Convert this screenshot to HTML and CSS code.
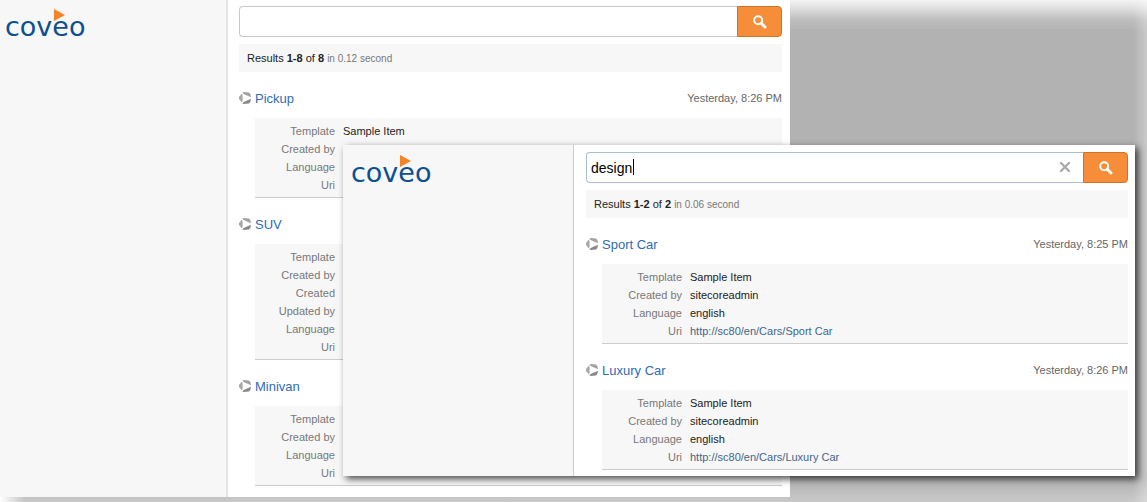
FILE: index.html
```html
<!DOCTYPE html>
<html lang="en">

<head>
    <meta charset="UTF-8">
    <title>Coveo Search</title>
    <link rel="stylesheet" href="styles.css">
</head>

<body>

    <!-- shared icons -->
    <svg class="sprite" aria-hidden="true">
        <symbol id="icon-search" viewBox="0 0 14 14">
            <circle cx="5.2" cy="5.2" r="4" fill="none" stroke="#fff" stroke-width="1.9" />
            <path d="M8.2 8.2 L12 12" stroke="#fff" stroke-width="3" stroke-linecap="round" />
        </symbol>
        <symbol id="icon-item" viewBox="0 0 12 12">
            <path d="M2.6 1.8 L3.6 3 L3.6 9 L2.6 10.2 L0 7 L0 5 Z" fill="#a8a8a8" />
            <path d="M3.2 0.8 L5 0 L10 0.4 L11.4 2 L12 5.2 L4.6 2 Z" fill="#a2a2a2" />
            <path d="M3.2 11.2 L5 12 L10 11.6 L11.4 10 L12 6.8 L4.6 10 Z" fill="#8a8a8a" />
        </symbol>
        <symbol id="icon-arrow" viewBox="0 0 11 12">
            <path d="M0 0 L11 6 L0 12 Z" fill="#f58426" />
        </symbol>
    </svg>

    <div class="window window-back">
        <aside class="sidebar">
            <a class="logo" href="#">coveo<svg class="logo-arrow"><use href="#icon-arrow" /></svg></a>
        </aside>
        <main class="content">
            <form class="search">
                <input class="search-box" type="text" aria-label="Search">
                <button class="search-button" type="button" aria-label="Search"><svg><use href="#icon-search" /></svg></button>
            </form>
            <p class="summary">Results <b>1-8</b> of <b>8</b> <span>in 0.12 second</span></p>

            <article class="result">
                <header class="result-header">
                    <svg class="item-icon"><use href="#icon-item" /></svg>
                    <a class="title" href="#">Pickup</a>
                    <time>Yesterday, 8:26 PM</time>
                </header>
                <table class="fields">
                    <tr><th scope="row">Template</th><td>Sample Item</td></tr>
                    <tr><th scope="row">Created by</th><td>sitecoreadmin</td></tr>
                    <tr><th scope="row">Language</th><td></td></tr>
                    <tr><th scope="row">Uri</th><td></td></tr>
                </table>
            </article>

            <article class="result">
                <header class="result-header">
                    <svg class="item-icon"><use href="#icon-item" /></svg>
                    <a class="title" href="#">SUV</a>
                </header>
                <table class="fields">
                    <tr><th scope="row">Template</th><td></td></tr>
                    <tr><th scope="row">Created by</th><td></td></tr>
                    <tr><th scope="row">Created</th><td></td></tr>
                    <tr><th scope="row">Updated by</th><td></td></tr>
                    <tr><th scope="row">Language</th><td></td></tr>
                    <tr><th scope="row">Uri</th><td></td></tr>
                </table>
            </article>

            <article class="result">
                <header class="result-header">
                    <svg class="item-icon"><use href="#icon-item" /></svg>
                    <a class="title" href="#">Minivan</a>
                </header>
                <table class="fields">
                    <tr><th scope="row">Template</th><td></td></tr>
                    <tr><th scope="row">Created by</th><td></td></tr>
                    <tr><th scope="row">Language</th><td></td></tr>
                    <tr><th scope="row">Uri</th><td></td></tr>
                </table>
            </article>
        </main>
    </div>

    <div class="window window-front">
        <aside class="sidebar">
            <a class="logo" href="#">coveo<svg class="logo-arrow"><use href="#icon-arrow" /></svg></a>
        </aside>
        <main class="content">
            <form class="search">
                <input class="search-box" type="text" value="design" aria-label="Search">
                <span class="caret"></span>
                <button class="clear-button" type="button" aria-label="Clear"><svg viewBox="0 0 12 12"><path d="M2 2 L10 10 M10 2 L2 10" stroke="#aaa" stroke-width="2.4" stroke-linecap="round" /></svg></button>
                <button class="search-button" type="button" aria-label="Search"><svg><use href="#icon-search" /></svg></button>
            </form>
            <p class="summary">Results <b>1-2</b> of <b>2</b> <span>in 0.06 second</span></p>

            <article class="result">
                <header class="result-header">
                    <svg class="item-icon"><use href="#icon-item" /></svg>
                    <a class="title" href="#">Sport Car</a>
                    <time>Yesterday, 8:25 PM</time>
                </header>
                <table class="fields">
                    <tr><th scope="row">Template</th><td>Sample Item</td></tr>
                    <tr><th scope="row">Created by</th><td>sitecoreadmin</td></tr>
                    <tr><th scope="row">Language</th><td>english</td></tr>
                    <tr><th scope="row">Uri</th><td><a href="#">http://sc80/en/Cars/Sport Car</a></td></tr>
                </table>
            </article>

            <article class="result">
                <header class="result-header">
                    <svg class="item-icon"><use href="#icon-item" /></svg>
                    <a class="title" href="#">Luxury Car</a>
                    <time>Yesterday, 8:26 PM</time>
                </header>
                <table class="fields">
                    <tr><th scope="row">Template</th><td>Sample Item</td></tr>
                    <tr><th scope="row">Created by</th><td>sitecoreadmin</td></tr>
                    <tr><th scope="row">Language</th><td>english</td></tr>
                    <tr><th scope="row">Uri</th><td><a href="#">http://sc80/en/Cars/Luxury Car</a></td></tr>
                </table>
            </article>
        </main>
    </div>

</body>

</html>
```
FILE: styles.css
```css
* {
    box-sizing: border-box;
}

body {
    position: relative;
    margin: 0;
    min-height: 100vh;
    font-family: "Liberation Sans", Arial, sans-serif;
    font-size: 11px;
    color: #222;
    background:
        linear-gradient(to bottom, rgba(255, 255, 255, 0.85), rgba(255, 255, 255, 0.6) 8px, rgba(255, 255, 255, 0.15) 20px, transparent 32px),
        linear-gradient(to left, rgba(255, 255, 255, 0.3), transparent 14px),
        linear-gradient(to right, #fff, transparent 24px),
        linear-gradient(to top, rgba(255, 255, 255, 0.3), transparent 24px),
        #b2b2b2;
}

a {
    text-decoration: none;
}

.sprite {
    position: absolute;
    width: 0;
    height: 0;
}

.window {
    display: flex;
    background: #fff;
}

.window-back {
    margin-right: 357px;
}

.window-front {
    position: absolute;
    top: 145px;
    left: 343px;
    right: 12px;
    box-shadow: 3px 3px 7px rgba(0, 0, 0, 0.7);
}

.sidebar {
    flex: none;
    width: 228px;
    padding: 9px 5px;
    background: #f7f7f7;
    border-right: 2px solid #e4e4e4;
}

.window-front .sidebar {
    width: 231px;
    padding: 10px 8px;
    border-right: 1px solid #ccc;
}

.logo {
    position: relative;
    display: inline-block;
    font-family: "DejaVu Sans", sans-serif;
    font-size: 27px;
    line-height: 36px;
    color: #0d4f8f;
}

.logo-arrow {
    position: absolute;
    top: 0;
    left: 49px;
    width: 11px;
    height: 12px;
}

.content {
    flex: 1;
    padding: 6px 8px 11px 11px;
}

.window-front .content {
    padding: 7px 7px 6px 12px;
}

.search {
    position: relative;
    display: flex;
    height: 31px;
}

.search-box {
    flex: 1;
    min-width: 0;
    padding: 0 4px;
    font: 14px "Liberation Sans", Arial, sans-serif;
    color: #000;
    background: #fff;
    border: 1px solid #c8c8c8;
    border-right: 0;
    border-radius: 4px 0 0 4px;
    outline: none;
}

.window-front .search-box {
    border-color: #a9bfd9;
}

.caret {
    position: absolute;
    top: 7px;
    left: 47px;
    width: 1px;
    height: 16px;
    background: #000;
}

.search-button {
    display: flex;
    align-items: center;
    justify-content: center;
    width: 45px;
    padding: 0;
    background: #f68d38;
    border: 1px solid #cf7424;
    border-radius: 0 4px 4px 0;
}

.search-button svg {
    width: 14px;
    height: 14px;
}

.clear-button {
    position: absolute;
    top: 9px;
    right: 57px;
    width: 12px;
    height: 12px;
    padding: 0;
    background: none;
    border: 0;
}

.clear-button svg {
    display: block;
    width: 12px;
    height: 12px;
}

.summary {
    height: 28px;
    margin: 7px 0 16px;
    padding: 0 8px;
    line-height: 28px;
    background: #f7f7f7;
}

.summary span {
    font-size: 10px;
    color: #777;
}

.result + .result {
    margin-top: 16px;
}

.result-header {
    display: flex;
    align-items: center;
    height: 20px;
    margin-bottom: 10px;
}

.item-icon {
    width: 12px;
    height: 12px;
    margin-right: 4px;
}

.title {
    font-size: 13px;
    color: #2e6cb5;
}

time {
    margin-left: auto;
    color: #666;
}

.fields {
    display: block;
    margin-left: 16px;
    padding: 4px 0 3px;
    border-spacing: 0;
    background: #f7f7f7;
    border-bottom: 1px solid #ccc;
}

.fields th,
.fields td {
    height: 18px;
    padding: 0;
    line-height: 18px;
}

.fields th {
    width: 80px;
    font-weight: normal;
    text-align: right;
    color: #777;
}

.fields td {
    padding-left: 8px;
}

.fields td a {
    color: #44658a;
}
```
